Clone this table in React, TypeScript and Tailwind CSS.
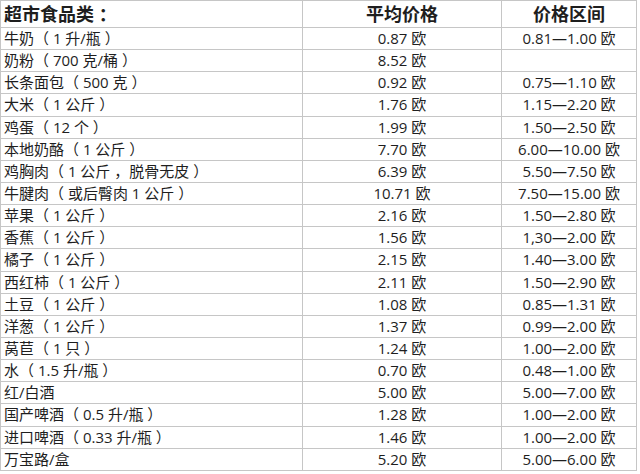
const rows: [string, string, string][] = [
  ["牛奶（ 1 升/瓶 ）", "0.87 欧", "0.81—1.00 欧"],
  ["奶粉（ 700 克/桶 ）", "8.52 欧", ""],
  ["长条面包（ 500 克 ）", "0.92 欧", "0.75—1.10 欧"],
  ["大米（ 1 公斤 ）", "1.76 欧", "1.15—2.20 欧"],
  ["鸡蛋（ 12 个 ）", "1.99 欧", "1.50—2.50 欧"],
  ["本地奶酪（ 1 公斤 ）", "7.70 欧", "6.00—10.00 欧"],
  ["鸡胸肉（ 1 公斤 ，脱骨无皮 ）", "6.39 欧", "5.50—7.50 欧"],
  ["牛腱肉（ 或后臀肉 1 公斤 ）", "10.71 欧", "7.50—15.00 欧"],
  ["苹果（ 1 公斤 ）", "2.16 欧", "1.50—2.80 欧"],
  ["香蕉（ 1 公斤 ）", "1.56 欧", "1,30—2.00 欧"],
  ["橘子（ 1 公斤 ）", "2.15 欧", "1.40—3.00 欧"],
  ["西红柿（ 1 公斤 ）", "2.11 欧", "1.50—2.90 欧"],
  ["土豆（ 1 公斤 ）", "1.08 欧", "0.85—1.31 欧"],
  ["洋葱（ 1 公斤 ）", "1.37 欧", "0.99—2.00 欧"],
  ["莴苣（ 1 只 ）", "1.24 欧", "1.00—2.00 欧"],
  ["水（ 1.5 升/瓶 ）", "0.70 欧", "0.48—1.00 欧"],
  ["红/白酒", "5.00 欧", "5.00—7.00 欧"],
  ["国产啤酒（ 0.5 升/瓶 ）", "1.28 欧", "1.00—2.00 欧"],
  ["进口啤酒（ 0.33 升/瓶 ）", "1.46 欧", "1.00—2.00 欧"],
  ["万宝路/盒", "5.20 欧", "5.00—6.00 欧"],
];

export default function App() {
  return (
    <div className="h-[474px] w-[640px] bg-white font-['Open_Sans','Noto_Sans_CJK_SC',sans-serif] text-[#1e1e1e]">
      <div className="w-[637px] border-l border-t border-[#c6c6c6]">
        <div className="flex h-[27px] border-b border-[#c6c6c6] text-[18px] font-bold leading-none">
          <div className="flex w-[302px] items-center border-r border-[#c6c6c6] pl-[3px]">超市食品类 ：</div>
          <div className="flex w-[199px] items-center justify-center border-r border-[#c6c6c6]">平均价格</div>
          <div className="flex w-[135px] items-center justify-center border-r border-[#c6c6c6]">价格区间</div>
        </div>
        {rows.map(([name, avg, range]) => (
          <div key={name} className="flex h-[22.15px] border-b border-[#c6c6c6] text-[15px] leading-none">
            <div className="flex w-[302px] items-center border-r border-[#c6c6c6] pl-[3px]">{name}</div>
            <div className="flex w-[199px] items-center justify-center border-r border-[#c6c6c6]">{avg}</div>
            <div className="flex w-[135px] items-center justify-center border-r border-[#c6c6c6]">{range}</div>
          </div>
        ))}
      </div>
    </div>
  );
}
